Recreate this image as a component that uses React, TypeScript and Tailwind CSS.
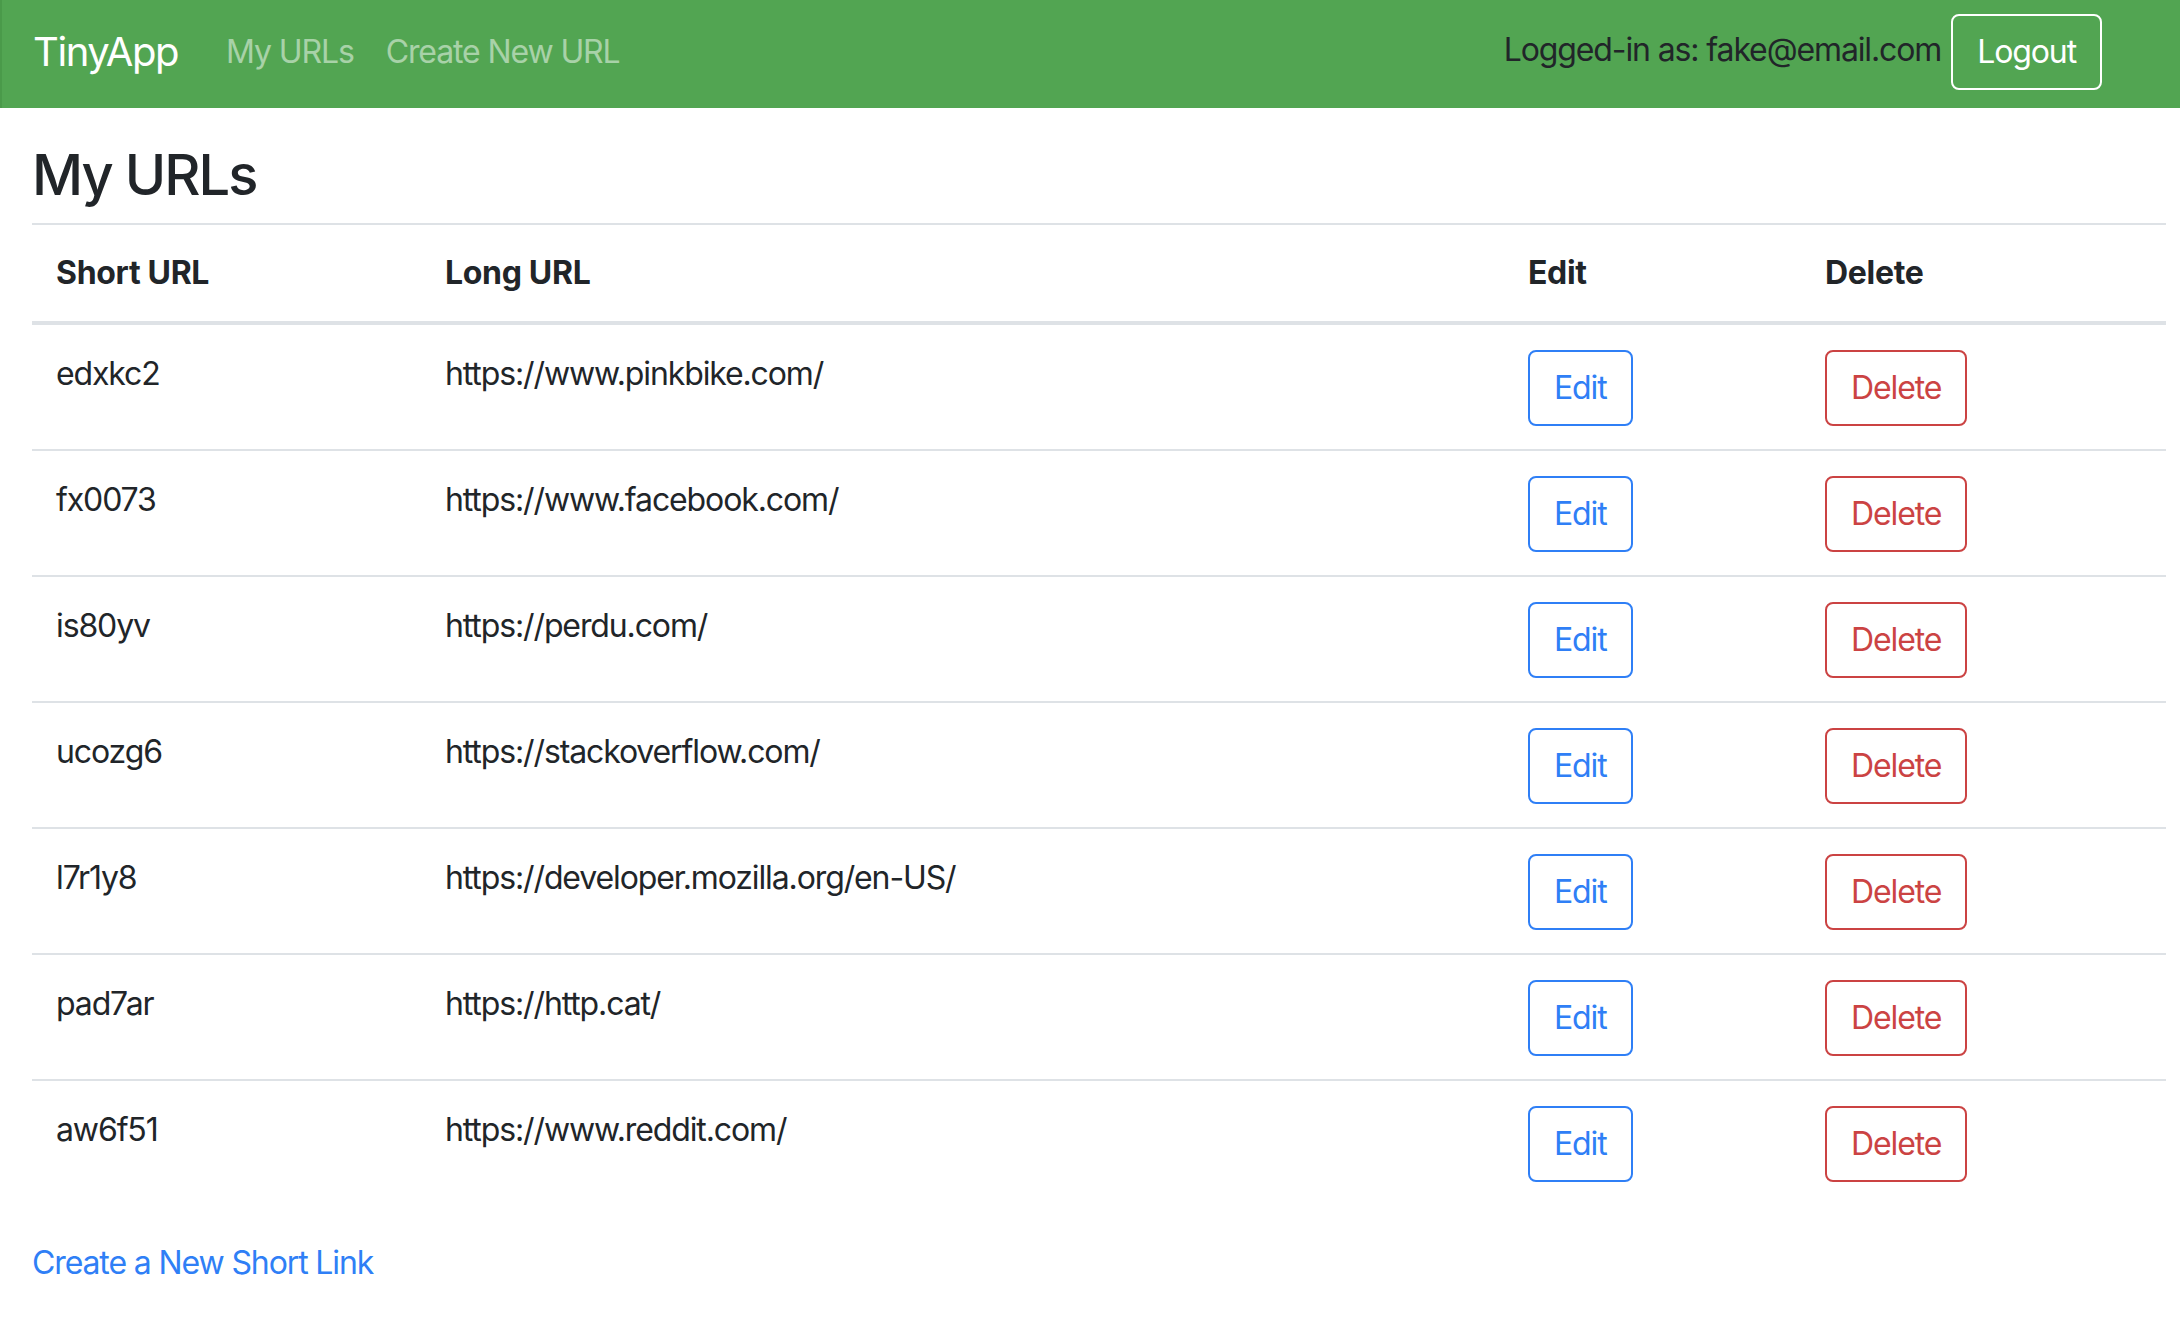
const urls = [
  { id: "edxkc2", long: "https://www.pinkbike.com/" },
  { id: "fx0073", long: "https://www.facebook.com/" },
  { id: "is80yv", long: "https://perdu.com/" },
  { id: "ucozg6", long: "https://stackoverflow.com/" },
  { id: "l7r1y8", long: "https://developer.mozilla.org/en-US/" },
  { id: "pad7ar", long: "https://http.cat/" },
  { id: "aw6f51", long: "https://www.reddit.com/" },
];

function Navbar() {
  return (
    <nav className="flex h-[108px] items-center border-l-[2px] border-[#4a9a4a] bg-[#52a552] pb-[4px] pl-[31px] pr-[78px]">
      <a className="mr-[32px] text-[40px] leading-[60px] tracking-[-0.035em] text-white" href="#">
        TinyApp
      </a>
      <a className="px-[16px] text-[32px] leading-[48px] tracking-[-0.035em] text-white/50" href="#">
        My URLs
      </a>
      <a className="px-[16px] text-[32px] leading-[48px] tracking-[-0.035em] text-white/50" href="#">
        Create New URL
      </a>

      <div className="ml-auto flex items-center">
        <span className="mb-[4px] text-[32px] leading-[48px] tracking-[-0.035em] text-[#212529]">
          Logged-in as: fake@email.com
        </span>
        <button className="ml-[10px] rounded-[8px] border-[2px] border-white px-[24px] py-[12px] text-[32px] leading-[48px] tracking-[-0.035em] text-white">
          Logout
        </button>
      </div>
    </nav>
  );
}

export default function App() {
  return (
    <div className="min-h-[1330px] bg-white font-[Inter,'Noto_Sans',sans-serif] text-[#212529]">
      <Navbar />

      <main className="pl-[32px] pr-[14px]">
        <h3 className="mb-[14px] mt-[34px] text-[56px] font-medium leading-[67px] tracking-[-0.035em]">
          My URLs
        </h3>

        <table className="mb-[34px] w-full border-collapse text-left text-[32px] leading-[48px]">
          <thead>
            <tr className="border-t-[2px] border-b-[4px] border-[#dee2e6]">
              <th className="w-[389px] p-[24px] align-bottom font-bold tracking-[-0.01em]">Short URL</th>
              <th className="w-[1083px] p-[24px] align-bottom font-bold tracking-[-0.01em]">Long URL</th>
              <th className="w-[297px] p-[24px] align-bottom font-bold tracking-[-0.01em]">Edit</th>
              <th className="p-[24px] align-bottom font-bold tracking-[-0.01em]">Delete</th>
            </tr>
          </thead>
          <tbody>
            {urls.map((u) => (
              <tr key={u.id} className="border-t-[2px] border-[#dee2e6]">
                <td className="px-[24px] pb-[23px] pt-[25px] align-top tracking-[-0.035em]">{u.id}</td>
                <td className="px-[24px] pb-[23px] pt-[25px] align-top tracking-[-0.035em]">{u.long}</td>
                <td className="px-[24px] pb-[23px] pt-[25px] align-top">
                  <button className="rounded-[8px] border-[2px] border-[#2f7ff6] px-[24px] py-[12px] leading-[48px] tracking-[-0.035em] text-[#2f7ff6]">
                    Edit
                  </button>
                </td>
                <td className="px-[24px] pb-[23px] pt-[25px] align-top">
                  <button className="rounded-[8px] border-[2px] border-[#cb4343] px-[24px] py-[12px] leading-[48px] tracking-[-0.035em] text-[#cb4343]">
                    Delete
                  </button>
                </td>
              </tr>
            ))}
          </tbody>
        </table>

        <a className="text-[32px] leading-[48px] tracking-[-0.035em] text-[#2f7ff6]" href="#">
          Create a New Short Link
        </a>
      </main>
    </div>
  );
}
